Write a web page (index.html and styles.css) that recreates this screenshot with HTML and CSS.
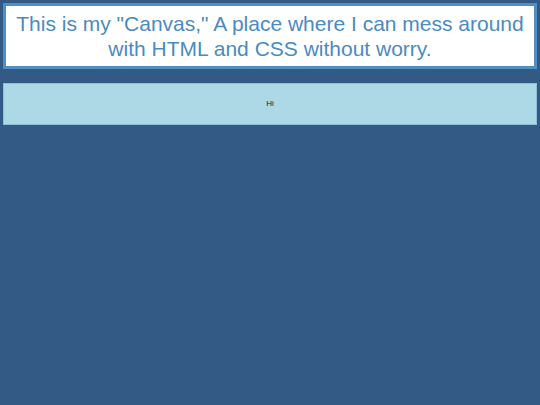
FILE: index.html
```html
<!DOCTYPE html>
<html lang="en">
<head>
    <meta charset="UTF-8">
    <title>Canvas</title>
    <link rel="stylesheet" href="styles.css">
</head>
<body>

    <div class="title-box">
        <h1>This is my "Canvas," A place where I can mess around with HTML and CSS without worry.</h1>
    </div>

    <div class="hi-box">
        <p>Hi</p>
    </div>

</body>
</html>
```

FILE: styles.css
```css
        * {
            margin: 0;
            padding: 0;
            box-sizing: border-box;
        }
        body {
            background-color: #335a84;
            padding: 3px;
            font-family: "Liberation Sans", Arial, sans-serif;
        }
        .title-box {
            background-color: white;
            border: 3px solid #4f8fc4;
            padding: 5px 2px;
            text-align: center;
        }
        .title-box h1 {
            font-size: 21px;
            font-weight: normal;
            line-height: 25px;
            color: #4a8bc1;
        }
        .hi-box {
            margin-top: 14px;
            height: 42px;
            background-color: #add8e6;
            border: 1px solid #8ebfda;
            display: flex;
            align-items: center;
            justify-content: center;
        }
        .hi-box p {
            font-size: 8px;
            color: #222;
            margin-top: -2px;
        }
```
